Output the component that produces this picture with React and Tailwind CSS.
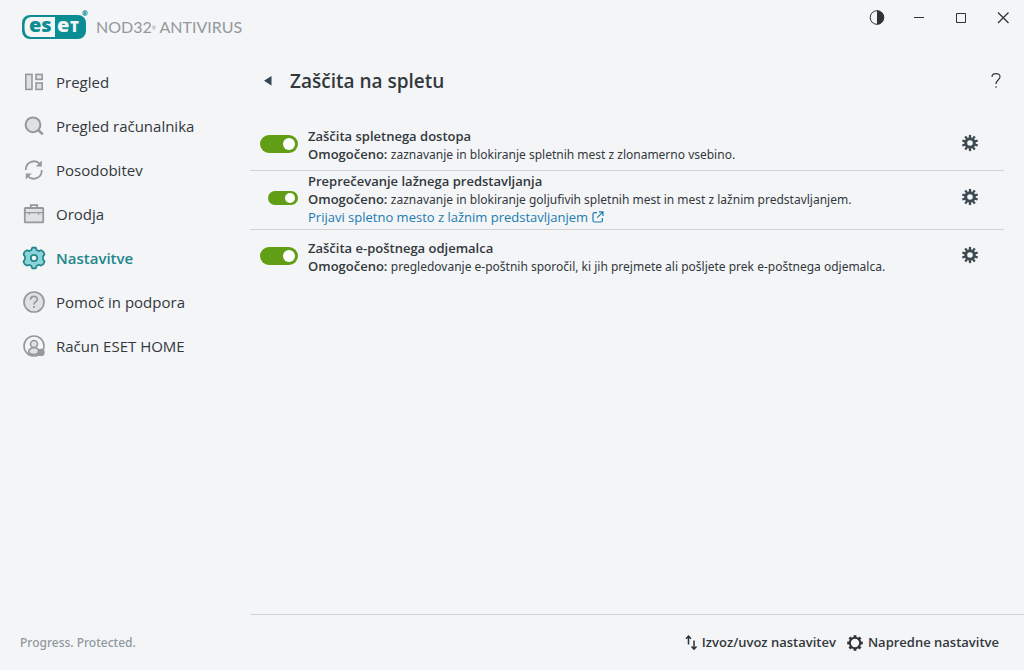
import { useState } from 'react';
import clsx from 'clsx';

const teeth = (count) => Array.from({ length: count }, (_, i) => (i * 360) / count);

const GridIcon = () => (
  <svg width="22" height="22" viewBox="0 0 22 22" fill="#dfe1e3" stroke="#96999c" strokeWidth="1.6">
    <rect x="2.8" y="3.4" width="6.2" height="15" />
    <rect x="13" y="3.4" width="6.2" height="5" />
    <rect x="13" y="12" width="6.2" height="6.4" />
  </svg>
);

const SearchIcon = () => (
  <svg width="22" height="22" viewBox="0 0 22 22" fill="#dfe1e3" stroke="#96999c" strokeWidth="2">
    <circle cx="10" cy="9.8" r="7.4" />
    <path d="M15.2 15 19.8 19.400" strokeWidth="2.6" />
  </svg>
);

const RefreshIcon = () => (
  <svg width="22" height="22" viewBox="0 0 22 22" fill="none" stroke="#96999c" strokeWidth="1.8">
    <path d="M2.8 11C2.8 2.700 12 -.3 17 5" />
    <path d="M18.8 11c0 8.300-9.200 11.300-14.200 6" />
    <path d="M18.8 1.600v6h-6zM2.800 20.400v-6h6z" fill="#96999c" stroke="none" />
  </svg>
);

const CaseIcon = () => (
  <svg width="22" height="22" viewBox="0 0 22 22" fill="#dfe1e3" stroke="#96999c" strokeWidth="1.8">
    <path d="M7.8 5V2.200h6.400V5" fill="none" />
    <rect x="1.8" y="5" width="18.400" height="14.400" rx=".6" />
    <path d="M2 9.600h18M6.400 9.600v2.200M15.600 9.600v2.200" strokeWidth="1.300" />
  </svg>
);

const SettingsIcon = () => (
  <svg width="24" height="24" viewBox="0 0 24 24" fill="#8ad3d9" stroke="#21868a" strokeWidth="1.7" strokeLinejoin="round">
    <path d="M9.4 3.9 10.2 1.7h3.6l.8 2.2 2.1 1.2 2.3-.9 2.500 1.700 1 2.600-1.500 1.900v2.900l1.500 2.100-1 2.600-2.500 1.600-2.300-.8-2.100 1.100-.8 2.400h-3.600l-.8-2.400-2.100-1.100-2.300.8-2.500-1.600-1-2.600L3 13.300v-2.900L1.500 8.500l1-2.600L5 4.200l2.300.9z" />
    <circle cx="12" cy="12" r="3.2" fill="#f3f5f7" />
  </svg>
);

const HelpIcon = () => (
  <svg width="24" height="24" viewBox="0 0 24 24" fill="none" stroke="#96999c" strokeWidth="1.7">
    <circle cx="12" cy="12" r="10" fill="#dfe1e3" />
    <path d="M8.6 9.700c0-4.400 6.800-4.400 6.800-.4 0 2.500-3.400 2.400-3.400 5.100" />
    <path d="M12 16v2" />
  </svg>
);

const AccountIcon = () => (
  <svg width="24" height="24" viewBox="0 0 24 24" fill="none" stroke="#96999c" strokeWidth="1.6">
    <circle cx="12" cy="12" r="10" />
    <path d="M6.500 18.500c.2-3.200 1.900-4 3.700-4.700h3.600c1.800.7 3.500 1.500 3.700 4.700-3.300 2.600-7.700 2.600-11 0z" fill="#dfe1e3" />
    <circle cx="12" cy="10" r="3.500" fill="#dfe1e3" />
    <circle cx="19" cy="18.400" r="3.700" fill="#96999c" stroke="none" />
  </svg>
);

const Gear = ({ thin }) => (
  <svg width="18" height="18" viewBox="0 0 18 18" fill="none" stroke={thin ? '#2f3337' : '#3d4a52'}>
    <circle cx="9" cy="9" r={thin ? 5.2 : 4.3} strokeWidth={thin ? 2 : 3} />
    {teeth(thin ? 8 : 10).map((angle) => (
      <path key={angle} d={thin ? 'M9 1.200v2.600' : 'M9 .9v3'} strokeWidth={thin ? 2.8 : 2.3} transform={`rotate(${angle} 9 9)`} />
    ))}
  </svg>
);

const menu = [
  { label: 'Pregled', icon: GridIcon },
  { label: 'Pregled računalnika', icon: SearchIcon },
  { label: 'Posodobitev', icon: RefreshIcon },
  { label: 'Orodja', icon: CaseIcon },
  { label: 'Nastavitve', icon: SettingsIcon, active: true },
  { label: 'Pomoč in podpora', icon: HelpIcon },
  { label: 'Račun ESET HOME', icon: AccountIcon },
];

const features = [
  {
    id: 'web',
    title: 'Zaščita spletnega dostopa',
    text: 'zaznavanje in blokiranje spletnih mest z zlonamerno vsebino.',
  },
  {
    id: 'phishing',
    title: 'Preprečevanje lažnega predstavljanja',
    text: 'zaznavanje in blokiranje goljufivih spletnih mest in mest z lažnim predstavljanjem.',
    link: 'Prijavi spletno mesto z lažnim predstavljanjem',
    nested: true,
  },
  {
    id: 'mail',
    title: 'Zaščita e-poštnega odjemalca',
    text: 'pregledovanje e-poštnih sporočil, ki jih prejmete ali pošljete prek e-poštnega odjemalca.',
  },
];

const Logo = () => (
  <div className="flex h-10 items-center pl-[21px]">
    <svg width="68" height="32" viewBox="0 0 68 32" className="shrink-0" fontFamily="'Open Sans', sans-serif" fontWeight="800">
      <rect x="1" y="5" width="64" height="24" rx="8" fill="#0c8d94" />
      <path d="M34 7H12C6 7 3.500 9 3.500 17S6 27 12 27h22z" fill="#f3f5f7" />
      <text x="8" y="22" fontSize="20" fill="#0c8d94">es</text>
      <text x="36" y="22" fontSize="20" fill="#f3f5f7">e</text>
      <text x="49" y="22" fontSize="15" fill="#f3f5f7">T</text>
      <text x="61" y="6" fontSize="7" fill="#0c8d94">®</text>
    </svg>
    <span className="ml-[7px] pt-px font-['Lato',sans-serif] text-[16px] whitespace-nowrap text-[#93989d]">
      NOD32<sup className="text-[5px]">®</sup> ANTIVIRUS
    </span>
  </div>
);

const Feature = ({ item, last }) => {
  const [enabled, setEnabled] = useState(true);

  return (
    <li
      className={clsx(
        'mr-5 flex items-center gap-[10px] pr-[25px] pl-[10px]',
        !last && 'border-b border-[#d0d3d6]',
        item.nested ? 'pt-px pb-[3px]' : last ? 'py-[9px]' : 'pt-[9px] pb-[7px]'
      )}
    >
      <div className="flex w-[38px] shrink-0 justify-end pb-[2px]">
        <input
          id={item.id}
          type="checkbox"
          role="switch"
          checked={enabled}
          onChange={(e) => setEnabled(e.target.checked)}
          className={clsx(
            'flex cursor-pointer appearance-none items-center rounded-full bg-[#8d9499] px-[3px] before:rounded-full before:bg-white checked:justify-end checked:bg-[#629e15]',
            item.nested ? 'h-[14px] w-[30px] before:size-[10px]' : 'h-[18px] w-[38px] before:size-3'
          )}
        />
      </div>
      <div className="min-w-0 flex-1 text-[13px] leading-[18px]">
        <label htmlFor={item.id} className="block font-semibold">{item.title}</label>
        <p className="h-[18px]">
          <span className="font-semibold">Omogočeno:</span>{' '}
          <span className="font-['Noto_Sans',sans-serif] text-[12px]">{item.text}</span>
        </p>
        {item.link && (
          <a href="#report" className="flex items-center gap-1 font-medium text-[#1c7bb0]">
            {item.link}
            <svg width="12" height="12" viewBox="0 0 12 12" fill="none" stroke="currentColor" strokeWidth="1.2">
              <path d="M5 1.600H2.500C1.700 1.600 1 2.300 1 3.100v6.400c0 .8.700 1.500 1.500 1.500h6.400c.8 0 1.500-.7 1.500-1.500V7M7 .900h4v4M11 .900 5.200 6.700" />
            </svg>
          </a>
        )}
      </div>
      <button type="button" aria-label={item.title} className="shrink-0 cursor-pointer pb-1">
        <Gear />
      </button>
    </li>
  );
};

const App = () => {
  return (
    <div className="flex min-h-screen bg-[#f3f5f7] font-['Open_Sans','Noto_Sans',sans-serif] text-[#33383d]">
      {/* Sidebar */}
      <aside className="flex w-[250px] shrink-0 flex-col">
        <div className="pt-[6px] pb-[14px]">
          <Logo />
        </div>
        <nav>
          {menu.map(({ label, icon: Icon, active }) => (
            <a
              key={label}
              href="#menu"
              className={clsx(
                'flex h-11 items-center gap-[10px] pl-[22px] text-[15px]',
                active && 'font-semibold text-[#21868a]'
              )}
            >
              <span className="flex w-6 justify-center">
                <Icon />
              </span>
              {label}
            </a>
          ))}
        </nav>
        <p className="mt-auto flex h-[55px] items-center pl-5 font-['Noto_Sans',sans-serif] text-[12px] font-medium text-[#8f979e]">
          Progress. Protected.
        </p>
      </aside>

      <div className="flex min-w-0 flex-1 flex-col">
        {/* Window controls */}
        <div className="flex h-[35px] justify-end">
          <button type="button" aria-label="Kontrast" className="flex w-[42px] items-center justify-center">
            <svg width="16" height="16" viewBox="0 0 16 16">
              <circle cx="8" cy="7.5" r="6.8" fill="none" stroke="#2f3337" />
              <path d="M8 .5a7 7 0 0 1 0 14z" fill="#2f3337" />
            </svg>
          </button>
          <button type="button" aria-label="Minimiraj" className="flex w-[42px] items-center justify-center">
            <svg width="12" height="12" viewBox="0 0 12 12" stroke="#2f3337">
              <path d="M1 5.500h10" />
            </svg>
          </button>
          <button type="button" aria-label="Povečaj" className="flex w-[42px] items-center justify-center">
            <svg width="12" height="12" viewBox="0 0 12 12" fill="none" stroke="#2f3337">
              <path d="M1.500 1.500h9v9h-9z" />
            </svg>
          </button>
          <button type="button" aria-label="Zapri" className="flex w-[42px] items-center justify-center">
            <svg width="12" height="12" viewBox="0 0 12 12" stroke="#2f3337" strokeWidth="1.3">
              <path d="m1 .5 10.500 10.500M11.500 .5 1 11" />
            </svg>
          </button>
        </div>

        {/* Page title */}
        <header className="mt-[25px] flex h-[42px] items-center pr-5 pl-[13px]">
          <button type="button" aria-label="Nazaj" className="flex size-[10px] cursor-pointer">
            <svg width="10" height="10" viewBox="0 0 10 10" fill="#33454f">
              <path d="M8.500 0v9.500L1 4.700z" />
            </svg>
          </button>
          <h1 className="ml-[17px] text-[19px] font-semibold">Zaščita na spletu</h1>
          <button type="button" aria-label="Pomoč" className="ml-auto cursor-pointer">
            <svg width="16" height="18" viewBox="0 0 16 18" fill="none" stroke="#33383d" strokeWidth="1.2">
              <path d="M4 5C4 .5 12 .5 12 4.700c0 3.200-4 3.400-4 7.300M8 14.200v1.600" />
            </svg>
          </button>
        </header>

        {/* Protection modules */}
        <main className="flex-1 pt-4">
          <ul>
            {features.map((item, index) => (
              <Feature key={item.id} item={item} last={index === features.length - 1} />
            ))}
          </ul>
        </main>

        <footer className="flex h-14 items-center justify-end gap-[10px] border-t border-[#d0d3d6] pr-[25px] text-[13px] font-semibold">
          <button type="button" className="flex cursor-pointer items-center gap-1">
            <svg width="14" height="18" viewBox="0 0 14 18" fill="none" stroke="#2f3337" strokeWidth="1.5">
              <path d="M4.500 10.500V2.500M2 4.800l2.500-2.600L7 4.800M10 6.500v8.600M7.500 12.600l2.500 2.600 2.500-2.600" />
            </svg>
            Izvoz/uvoz nastavitev
          </button>
          <button type="button" className="flex cursor-pointer items-center gap-1">
            <Gear thin />
            Napredne nastavitve
          </button>
        </footer>
      </div>
    </div>
  );
};

export default App;
